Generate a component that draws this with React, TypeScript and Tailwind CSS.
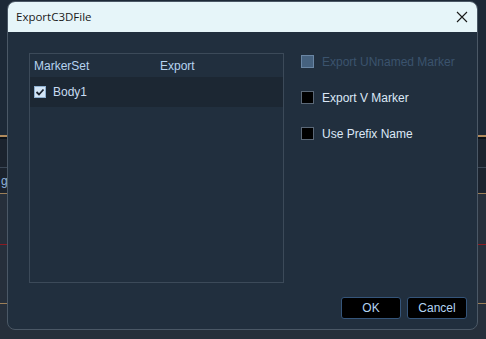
import React from 'react'

const font = { fontFamily: '"Liberation Sans", Arial, sans-serif' }

function Check({ state }: { state: 'checked' | 'off' | 'disabled' }) {
  if (state === 'checked') {
    return (
      <span className="w-[12px] h-[12px] bg-[#d4e6f7] border border-[#8fb0d0] flex items-center justify-center">
        <svg width="10" height="10" viewBox="0 0 10 10">
          <path d="M1.5 5 L4 7.5 L8.5 2.5" stroke="#1b2430" strokeWidth="1.8" fill="none" />
        </svg>
      </span>
    )
  }
  if (state === 'disabled') {
    return <span className="w-[13px] h-[13px] bg-[#46627f] border border-[#6a86a4]" />
  }
  return <span className="w-[13px] h-[13px] bg-black border border-[#5b6877]" />
}

function Option({ label, state }: { label: string; state: 'off' | 'disabled' }) {
  return (
    <div className="flex items-center gap-[8px] h-[13px]">
      <Check state={state} />
      <span className={`text-[12px] ${state === 'disabled' ? 'text-[#3b536d]' : 'text-[#dce8f6]'}`}>{label}</span>
    </div>
  )
}

function Backdrop() {
  return (
    <div className="flex flex-col w-full h-full">
      <div className="h-[135px] bg-[#1d2937]" />
      <div className="h-[2px] bg-[#b08a5c]" />
      <div className="h-[2px] bg-[#0d1218]" />
      <div className="h-[28px] bg-[#1b232e]" />
      <div className="h-[1px] bg-[#3b4756]" />
      <div className="h-[25px] bg-[#1b232e] flex items-center overflow-hidden">
        <span className="text-[12px] text-[#8fb4dc] pl-[1px]">gl</span>
      </div>
      <div className="h-[1px] bg-[#9c7f58]" />
      <div className="h-[50px] bg-[#262f3b]" />
      <div className="h-[1px] bg-[#8a1a22]" />
      <div className="h-[58px] bg-[#262f3b]" />
      <div className="h-[1px] bg-[#9c7f58]" />
      <div className="flex-1 bg-[#262f3b]" />
    </div>
  )
}

export default function App() {
  return (
    <div className="relative w-[486px] h-[339px] overflow-hidden bg-[#1d2937]" style={font}>
      <Backdrop />
      <div className="absolute left-[7px] top-[1px] w-[471px] h-[329px] rounded-[8px] border border-[#4b5866] bg-[#212f3e] flex flex-col overflow-hidden">
        <div className="h-[30px] bg-[#e6f5f9] flex items-center justify-between pl-[8px] pr-[9px] shrink-0">
          <span className="text-[11.5px] text-[#1a1a1a]" style={{ fontFamily: '"Open Sans", "Noto Sans", sans-serif' }}>ExportC3DFile</span>
          <svg width="12" height="12" viewBox="0 0 12 12">
            <path d="M1 1 L11 11 M11 1 L1 11" stroke="#1a1a1a" strokeWidth="1.1" fill="none" />
          </svg>
        </div>
        <div className="flex-1 flex flex-col pl-[21px] pr-[10px] pt-[21px] pb-[10px]">
          <div className="flex gap-[18px]">
            <div className="w-[255px] h-[230px] border border-[#3c4a59] flex flex-col">
              <div className="h-[23px] flex items-center text-[12px] text-[#b6d3f0]">
                <span className="pl-[4px] w-[130px]">MarkerSet</span>
                <span>Export</span>
              </div>
              <div className="h-[30px] bg-[#1c2733] flex items-center gap-[7px] pl-[4px]">
                <Check state="checked" />
                <span className="text-[12px] text-[#c8dcf2]">Body1</span>
              </div>
            </div>
            <div className="flex flex-col gap-[23px] pt-[2px] -ml-[1px]">
              <Option label="Export UNnamed Marker" state="disabled" />
              <Option label="Export V Marker" state="off" />
              <Option label="Use Prefix Name" state="off" />
            </div>
          </div>
          <div className="flex-1" />
          <div className="flex justify-end gap-[6px]">
            <button className="w-[60px] h-[22px] bg-black border border-[#35557a] rounded-[3px] text-[12px] text-[#b4d4f2]">OK</button>
            <button className="w-[60px] h-[22px] bg-black border border-[#35557a] rounded-[3px] text-[12px] text-[#b4d4f2]">Cancel</button>
          </div>
        </div>
      </div>
    </div>
  )
}
